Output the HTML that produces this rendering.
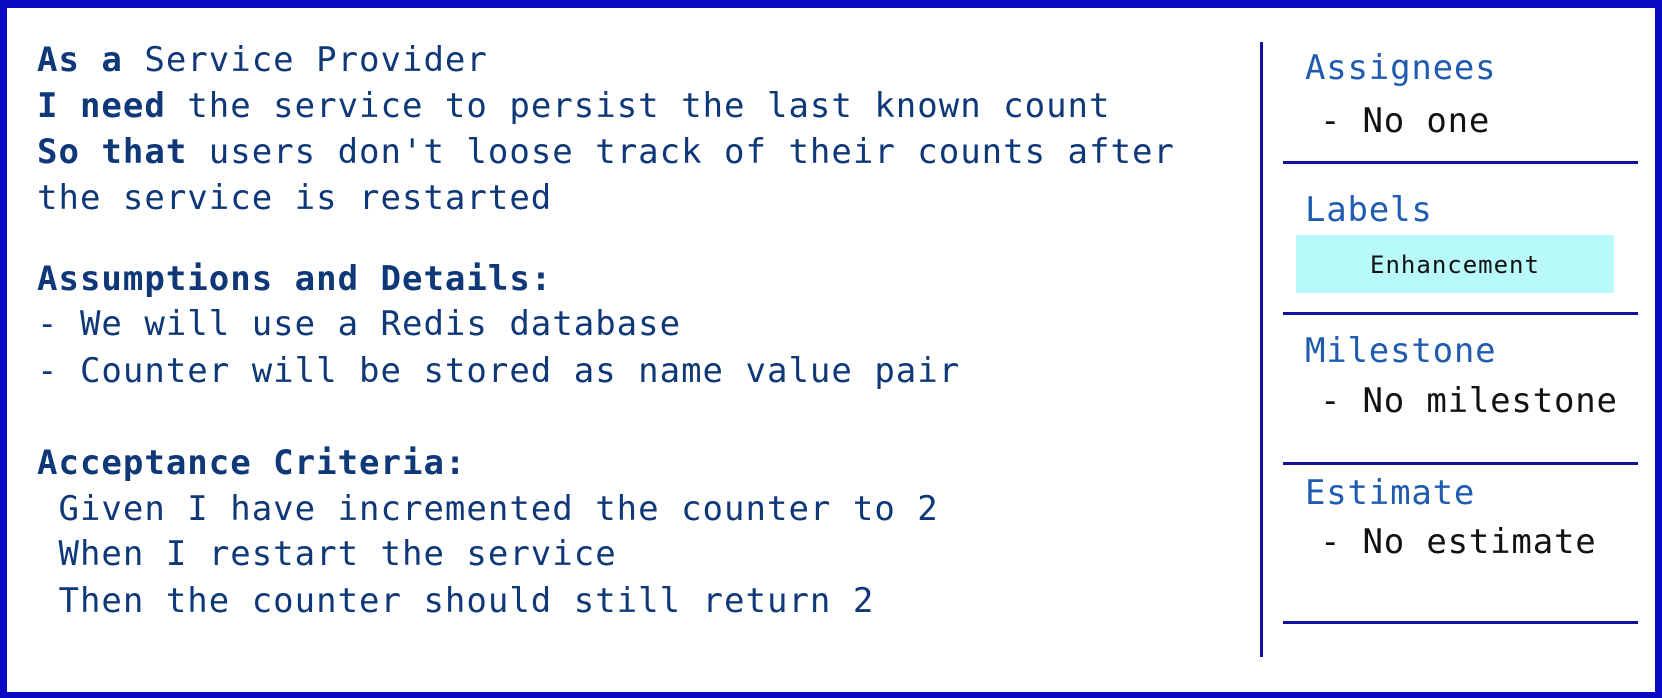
<!DOCTYPE html>
<html><head><meta charset="utf-8"><style>
html,body{margin:0;padding:0}
body{width:1662px;height:698px;position:relative;overflow:hidden;background:#fff;font-family:"DejaVu Sans Mono","Liberation Mono",monospace;}
.frame{position:absolute;left:0;top:0;width:1662px;height:698px;box-sizing:border-box;border:7px solid #0a0ac4;border-top-width:8px;border-bottom-width:6px}
.t{position:absolute;font-size:34px;letter-spacing:1px;color:#0f3878;white-space:pre;line-height:1}
.t b{font-weight:bold}
.h{position:absolute;font-size:34px;letter-spacing:0.8px;color:#1f5cb0;white-space:pre;line-height:1}
.v{position:absolute;font-size:34px;letter-spacing:0.8px;color:#111;white-space:pre;line-height:1}
.hl{position:absolute;left:1283px;width:355px;height:3px;background:#12129e}
</style></head><body>
<div class="frame"></div>
<div class="t" style="left:37px;top:43px"><b>As a</b> Service Provider</div>
<div class="t" style="left:37px;top:89px"><b>I need</b> the service to persist the last known count</div>
<div class="t" style="left:37px;top:135px"><b>So that</b> users don't loose track of their counts after</div>
<div class="t" style="left:37px;top:181px">the service is restarted</div>
<div class="t" style="left:37px;top:262px"><b>Assumptions and Details:</b></div>
<div class="t" style="left:37px;top:307px">- We will use a Redis database</div>
<div class="t" style="left:37px;top:354px">- Counter will be stored as name value pair</div>
<div class="t" style="left:37px;top:446px"><b>Acceptance Criteria:</b></div>
<div class="t" style="left:37px;top:492px"> Given I have incremented the counter to 2</div>
<div class="t" style="left:37px;top:537px"> When I restart the service</div>
<div class="t" style="left:37px;top:584px"> Then the counter should still return 2</div>

<div style="position:absolute;left:1260px;top:42px;width:3px;height:615px;background:#12129e"></div>
<div class="hl" style="top:161px"></div>
<div class="hl" style="top:312px"></div>
<div class="hl" style="top:462px"></div>
<div class="hl" style="top:621px"></div>

<div class="h" style="left:1305px;top:51px">Assignees</div>
<div class="v" style="left:1320px;top:104px">- No one</div>
<div class="h" style="left:1305px;top:193px">Labels</div>
<div style="position:absolute;left:1296px;top:235px;width:318px;height:58px;background:#b8fafa"></div>
<div style="position:absolute;left:1296px;top:236px;width:318px;height:58px;line-height:58px;text-align:center;font-size:24px;letter-spacing:1px;color:#111">Enhancement</div>
<div class="h" style="left:1305px;top:334px">Milestone</div>
<div class="v" style="left:1320px;top:384px">- No milestone</div>
<div class="h" style="left:1305px;top:476px">Estimate</div>
<div class="v" style="left:1320px;top:525px">- No estimate</div>
</body></html>
